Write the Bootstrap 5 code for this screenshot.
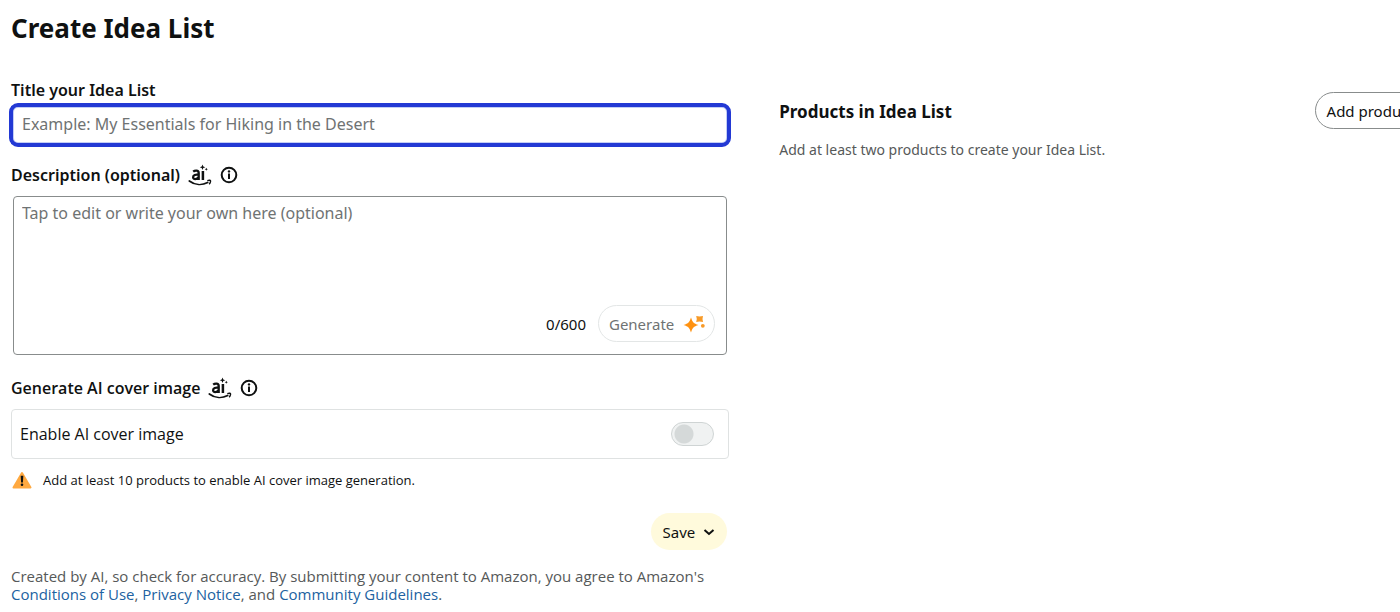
<!DOCTYPE html>
<html lang="en">
<head>
<meta charset="utf-8">
<meta name="viewport" content="width=device-width, initial-scale=1">
<title>Create Idea List</title>
<link href="https://cdn.jsdelivr.net/npm/bootstrap@5.3.0/dist/css/bootstrap.min.css" rel="stylesheet">
<style>
  body { font-family: "Noto Sans", "Open Sans", sans-serif; color: #0f1111; font-size: 16px; line-height: 24px; overflow-x: hidden; }
  .page { padding: 11px 0 8px 11px; }
  .plain-face { font-family: "Open Sans", "Noto Sans", sans-serif; }
  h1 { font-size: 26px; line-height: 34px; font-weight: 700; margin-bottom: 33px; }
  .columns { gap: 50px; }
  .editor { flex: 0 0 calc(52% - 4px); min-width: 0; }
  .products { margin: 14px -33px 0 0; min-width: 0; }
  .field-name { font-weight: 600; line-height: 24px; }
  .title-box { margin: 1px -2px 0; width: calc(100% + 4px); height: 44px; padding: 0 9px 2px; border: 4px solid #2339d4; border-radius: 9px; box-shadow: inset 0 0 0 1px #c3cdf6; outline: 0; color: #0f1111; }
  .title-box::placeholder, .desc-text::placeholder { color: #6f7373; opacity: 1; }
  .desc-box { margin: 9px 2px 0; border: 1px solid #888c8c; border-radius: 4px; padding: 4px 11px 12px 8px; }
  .desc-box:focus-within { border-color: #2339d4; }
  .desc-text { height: 104px; resize: none; border: 0; outline: 0; padding: 0; color: #0f1111; }
  .counter { font-size: 15px; line-height: 20px; }
  .pill { height: 37px; border-radius: 19px; font-size: 15px; line-height: 20px; padding: 0 11px; color: #0f1111; white-space: nowrap; }
  .pill-generate { border: 1px solid #e3e6e6; background: #fff; color: #6f7373; padding: 0 8px 0 10px; }
  .pill-save { border: 0; background: #fffadc; padding: 0 12px; }
  .pill-add { border: 1px solid #888c8c; background: #fff; }
  .cover-name { margin-top: 21px; }
  .cover-box { margin-top: 9px; height: 50px; border: 1px solid #dfe2e2; border-radius: 4px; padding: 0 14px 0 8px; }
  .cover-switch { appearance: none; width: 43px; height: 24px; margin: 0; border: 1px solid #cfd4d4; border-radius: 12px; background: radial-gradient(circle at 12px 11px, #d5d9d9 9px, #f0f2f2 10px); }
  .cover-switch:checked { background: radial-gradient(circle at 29px 11px, #fff 9px, #2162a1 10px); }
  .notice { font-size: 13px; line-height: 20px; margin-top: 11px; gap: 11px; }
  .save-row { margin-top: 23px; padding-right: 2px; }
  .legal { font-size: 15px; line-height: 18px; color: #565959; margin-top: 17px; }
  .legal a { color: #2162a1; text-decoration: none; }
  .products h2 { font-size: 17px; line-height: 24px; font-weight: 700; padding-top: 2px; }
  .products p { font-size: 14px; line-height: 20px; color: #565959; margin-top: 11px; }
  .info { width: 18px; height: 18px; padding: 0; border: 0; background: none; line-height: 0; }
</style>
</head>
<body>
<svg width="0" height="0" class="position-absolute" aria-hidden="true">
  <symbol id="ai-mark" viewBox="0 0 24 22">
    <g fill="none" stroke="#0f1111" stroke-width="2.300">
      <path d="M5.200 7.700C6.600 6.500 10.700 5.800 10.700 9V16M10.700 10.800C7.500 10.300 5.100 11 5.100 13.200C5.100 15.800 9 15.700 10.700 13.100"/>
      <path d="M14.900 7V16" stroke-width="2.500"/>
      <path d="M1.300 17C7.200 21.500 14.400 21.300 19.700 18.500" stroke-width="1.700" stroke-linecap="round"/>
      <path d="M19.300 16.700C21.200 15.900 22.900 16.100 22.500 17.600C22.300 18.600 21.900 19.500 21.100 20.200" stroke-width="1.400"/>
    </g>
    <path fill="#0f1111" d="M14.500 .5L15.300 2.500L17.300 3.300L15.300 4.100L14.500 6L13.700 4.100L11.800 3.300L13.700 2.500ZM18.300 3.700L18.800 4.700L19.800 5.200L18.800 5.700L18.300 6.700L17.800 5.700L16.800 5.200L17.800 4.700Z"/>
  </symbol>
  <symbol id="info-mark" viewBox="0 0 18 18">
    <circle cx="9" cy="9" r="7.300" fill="none" stroke="#0f1111" stroke-width="2"/>
    <circle cx="9" cy="5.400" r="1.200" fill="#0f1111"/>
    <path d="M9 7.600V13" stroke="#0f1111" stroke-width="2"/>
  </symbol>
</svg>

<main class="page">
  <h1>Create Idea List</h1>
  <div class="columns d-flex align-items-start">
    <form class="editor">
      <label class="field-name d-block" for="list-title">Title your Idea List</label>
      <input class="title-box d-block" id="list-title" type="text" placeholder="Example: My Essentials for Hiking in the Desert">

      <div class="d-flex align-items-center mt-3">
        <label class="field-name" for="list-desc">Description (optional)</label>
        <svg class="ms-2" width="24" height="22" aria-hidden="true"><use href="#ai-mark"/></svg>
        <button class="info ms-2" type="button" aria-label="About the description"><svg width="18" height="18"><use href="#info-mark"/></svg></button>
      </div>
      <div class="desc-box">
        <textarea class="desc-text d-block w-100" id="list-desc" maxlength="600" placeholder="Tap to edit or write your own here (optional)"></textarea>
        <div class="d-flex justify-content-end align-items-center gap-2">
          <span class="counter me-1">0/600</span>
          <button class="pill pill-generate d-flex align-items-center gap-2" type="button">Generate
            <svg width="24" height="20" viewBox="0 0 24 20" aria-hidden="true">
              <path fill="#ff9211" d="M9 3.500C10.500 8.200 11.500 9.500 16.500 11C11.500 12.500 10.500 13.800 9 18.500C7.500 13.800 6.500 12.500 1.500 11C6.500 9.500 7.500 8.200 9 3.500Z"/>
              <path fill="#f79a28" d="M14.200 2L17.500 2.400L21 2L20.500 5L21 8L17.500 7.500L14.200 8L14.800 5Z"/>
              <circle cx="20.800" cy="11.800" r="1.900" fill="#f79a28"/>
            </svg>
          </button>
        </div>
      </div>

      <div class="cover-name d-flex align-items-center">
        <span class="field-name plain-face me-1">Generate AI cover image</span>
        <svg class="ms-1" width="24" height="22" aria-hidden="true"><use href="#ai-mark"/></svg>
        <button class="info ms-2" type="button" aria-label="About AI cover images"><svg width="18" height="18"><use href="#info-mark"/></svg></button>
      </div>
      <div class="cover-box d-flex justify-content-between align-items-center">
        <label class="plain-face" for="cover-toggle">Enable AI cover image</label>
        <input class="cover-switch" id="cover-toggle" type="checkbox" role="switch">
      </div>
      <div class="notice plain-face d-flex align-items-center">
        <svg class="flex-shrink-0" width="21" height="20" viewBox="0 0 21 20" aria-hidden="true">
          <path d="M11 3L19.500 17.500H2.500Z" fill="#ffa940" stroke="#ffa940" stroke-width="2" stroke-linejoin="round"/>
          <path d="M9.700 5.800H12.300L11.900 12.500H10.100Z" fill="#0f1111"/>
          <circle cx="11" cy="14.800" r="1.300" fill="#0f1111"/>
        </svg>
        <span>Add at least 10 products to enable AI cover image generation.</span>
      </div>

      <div class="save-row d-flex justify-content-end">
        <button class="pill pill-save d-flex align-items-center gap-2" type="button" aria-haspopup="true">Save
          <svg width="12" height="8" viewBox="0 0 12 8" aria-hidden="true"><path d="M1.500 2L6 6L10.500 2" fill="none" stroke="#0f1111" stroke-width="2"/></svg>
        </button>
      </div>
      <p class="legal plain-face mb-0">Created by AI, so check for accuracy. By submitting your content to Amazon, you agree to Amazon's <a href="#">Conditions of Use</a>, <a href="#">Privacy Notice</a>, and <a href="#">Community Guidelines</a>.</p>
    </form>

    <section class="products flex-grow-1">
      <div class="d-flex justify-content-between align-items-center">
        <h2 class="mb-0">Products in Idea List</h2>
        <button class="pill pill-add" type="button">Add products</button>
      </div>
      <p class="mb-0">Add at least two products to create your Idea List.</p>
    </section>
  </div>
</main>
<script src="https://cdn.jsdelivr.net/npm/bootstrap@5.3.0/dist/js/bootstrap.bundle.min.js"></script>
</body>
</html>
